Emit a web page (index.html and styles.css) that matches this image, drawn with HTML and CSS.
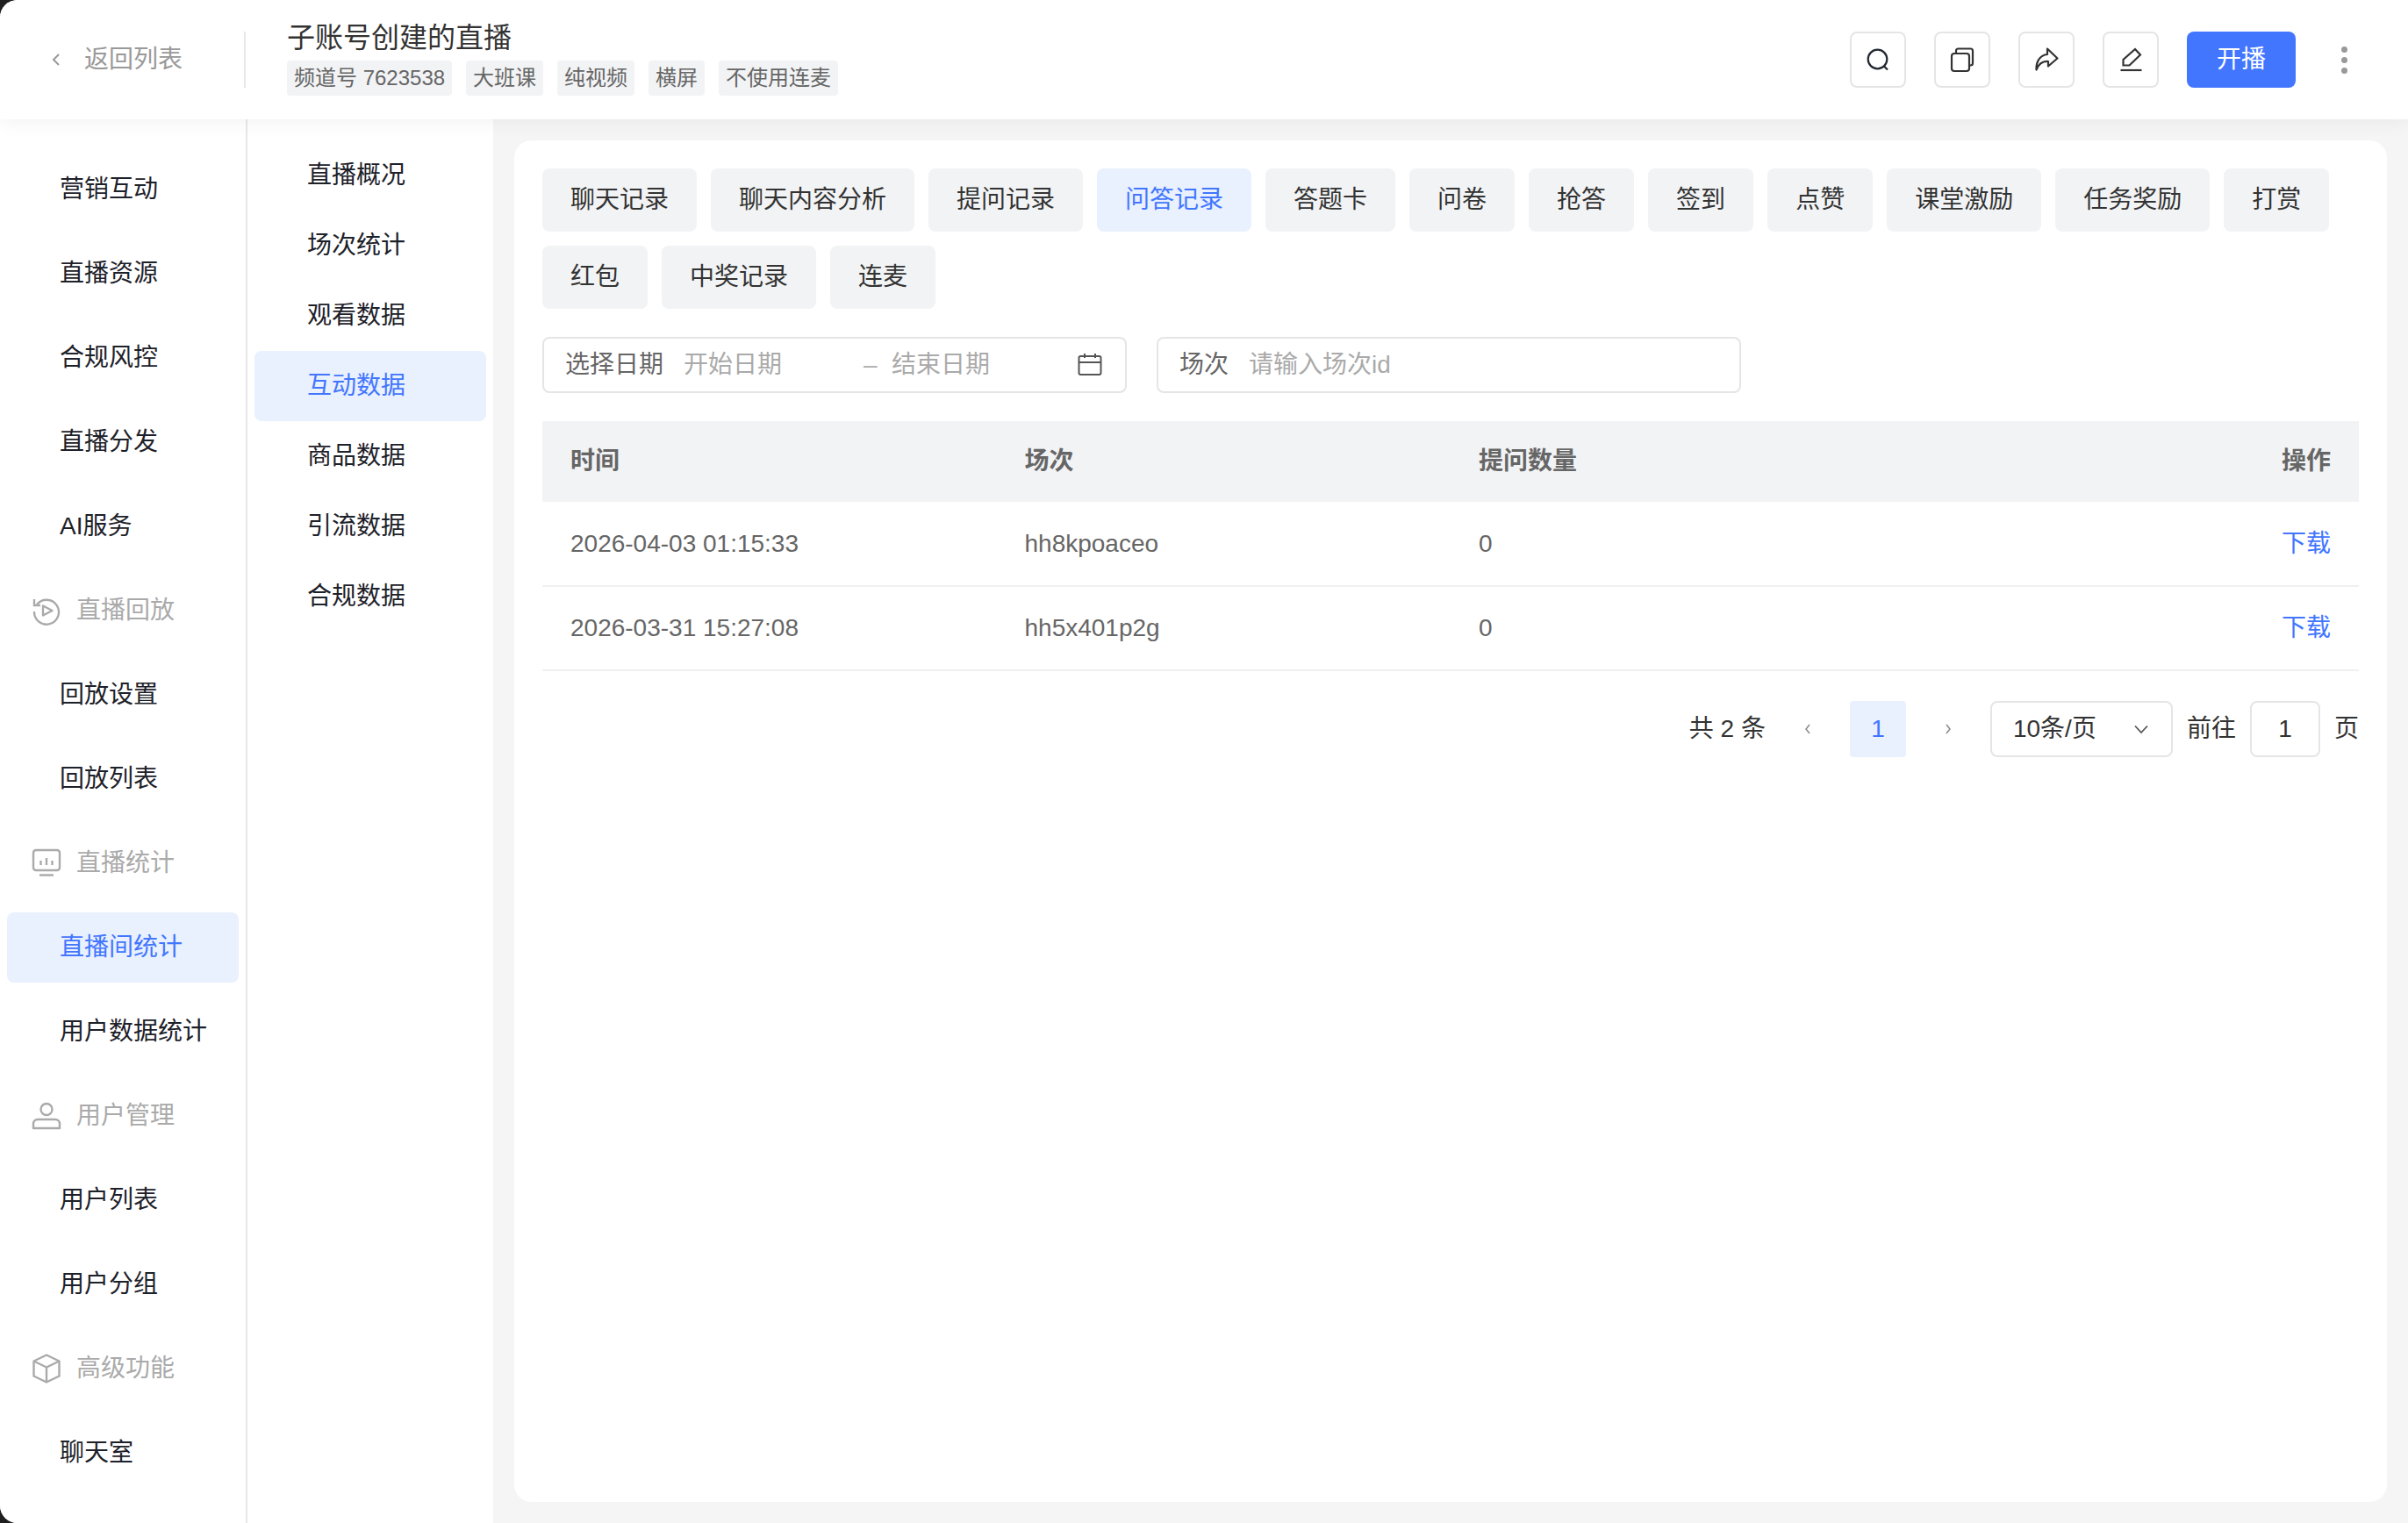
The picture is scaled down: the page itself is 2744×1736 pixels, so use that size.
FILE: index.html
```html
<!DOCTYPE html>
<html lang="zh-CN">
<head>
<meta charset="utf-8">
<title>互动数据</title>
<link rel="stylesheet" href="styles.css">
</head>
<body>
<div class="app">
  <header class="topbar">
    <a class="back">
      <svg class="back-icon" width="16" height="24" viewBox="0 0 16 24"><path d="M11 6 5 12l6 6" fill="none" stroke="#999" stroke-width="2"/></svg>
      <span>返回列表</span>
    </a>
    <div class="title-block">
      <h1 class="title">子账号创建的直播</h1>
      <div class="tags">
        <span class="tag">频道号 7623538</span>
        <span class="tag">大班课</span>
        <span class="tag">纯视频</span>
        <span class="tag">横屏</span>
        <span class="tag">不使用连麦</span>
      </div>
    </div>
    <div class="actions">
      <button class="icon-btn"><svg width="32" height="32" viewBox="0 0 32 32" fill="none" stroke="#222831" stroke-width="2.2"><circle cx="15.5" cy="15.5" r="10.8"/><path d="M22.5 23 27 27.5"/></svg></button>
      <button class="icon-btn"><svg width="32" height="32" viewBox="0 0 32 32" fill="none" stroke="#333" stroke-width="2.2"><rect x="4" y="9" width="20" height="20" rx="3"/><path d="M9 8.500V6a2.500 2.500 0 0 1 2.500-2.500H25.500A2.500 2.500 0 0 1 28 6V20a2.500 2.500 0 0 1-2.500 2.500H24"/></svg></button>
      <button class="icon-btn"><svg width="32" height="32" viewBox="0 0 32 32" fill="none" stroke="#333" stroke-width="2.2" stroke-linejoin="round"><path d="M17 3.500 28.500 14.500 18 23.500V18C12 17.500 7.500 20 4.500 27.500 4 18 9 10.500 17 10Z"/></svg></button>
      <button class="icon-btn"><svg width="32" height="32" viewBox="0 0 32 32" fill="none" stroke="#333" stroke-width="2.2"><path d="M21 4 27 10.500 14.500 22.500H7.500V16Z"/><path d="M4.500 28H28.500"/></svg></button>
      <button class="primary-btn">开播</button>
      <span class="more"><i></i><i></i><i></i></span>
    </div>
  </header>
  <div class="main">
    <nav class="nav-primary">
      <a class="nav-item">营销互动</a>
      <a class="nav-item">直播资源</a>
      <a class="nav-item">合规风控</a>
      <a class="nav-item">直播分发</a>
      <a class="nav-item">AI服务</a>
      <div class="nav-group">
        <svg width="36" height="36" viewBox="0 0 36 36" fill="none" stroke="#aaa" stroke-width="2.4"><path d="M7 11A14 14 0 1 1 4 19"/><path d="M4 5V12H11"/><path d="M14 12.500 24.500 18 14 23.500Z" stroke-linejoin="round"/></svg>
        <span>直播回放</span>
      </div>
      <a class="nav-item">回放设置</a>
      <a class="nav-item">回放列表</a>
      <div class="nav-group">
        <svg width="36" height="36" viewBox="0 0 36 36" fill="none" stroke="#aaa" stroke-width="2.4"><rect x="3" y="3" width="30" height="23" rx="3"/><path d="M10 31.500H26"/><path d="M11.500 15V20M18 12V20M24.500 15V20"/></svg>
        <span>直播统计</span>
      </div>
      <a class="nav-item is-active">直播间统计</a>
      <a class="nav-item">用户数据统计</a>
      <div class="nav-group">
        <svg width="36" height="36" viewBox="0 0 36 36" fill="none" stroke="#aaa" stroke-width="2.4"><circle cx="18" cy="10.500" r="6.500"/><path d="M3 32V27A5 5 0 0 1 8 22H28A5 5 0 0 1 33 27V32Z" stroke-linejoin="round"/></svg>
        <span>用户管理</span>
      </div>
      <a class="nav-item">用户列表</a>
      <a class="nav-item">用户分组</a>
      <div class="nav-group">
        <svg width="36" height="36" viewBox="0 0 36 36" fill="none" stroke="#aaa" stroke-width="2.4" stroke-linejoin="round"><path d="M18 2.500 32.500 9.500V26.500L18 33.500 3.500 26.500V9.500Z"/><path d="M3.500 9.500 18 16.500 32.500 9.500M18 16.500V33.500"/></svg>
        <span>高级功能</span>
      </div>
      <a class="nav-item">聊天室</a>
    </nav>
    <nav class="nav-secondary">
      <a class="sub-item">直播概况</a>
      <a class="sub-item">场次统计</a>
      <a class="sub-item">观看数据</a>
      <a class="sub-item is-active">互动数据</a>
      <a class="sub-item">商品数据</a>
      <a class="sub-item">引流数据</a>
      <a class="sub-item">合规数据</a>
    </nav>
    <section class="content">
      <div class="card">
        <div class="tabs">
          <span class="tab">聊天记录</span>
          <span class="tab">聊天内容分析</span>
          <span class="tab">提问记录</span>
          <span class="tab is-active">问答记录</span>
          <span class="tab">答题卡</span>
          <span class="tab">问卷</span>
          <span class="tab">抢答</span>
          <span class="tab">签到</span>
          <span class="tab">点赞</span>
          <span class="tab">课堂激励</span>
          <span class="tab">任务奖励</span>
          <span class="tab">打赏</span>
          <span class="tab">红包</span>
          <span class="tab">中奖记录</span>
          <span class="tab">连麦</span>
        </div>
        <div class="filters">
          <div class="field">
            <span class="field-label">选择日期</span>
            <span class="ph ph-start">开始日期</span>
            <span class="ph ph-dash">–</span>
            <span class="ph ph-end">结束日期</span>
            <svg class="cal" width="28" height="28" viewBox="0 0 28 28" fill="none" stroke="#555" stroke-width="2"><rect x="1.500" y="4" width="25" height="21" rx="2"/><path d="M1.500 11H26.500M8 1V6M20 1V6"/></svg>
          </div>
          <div class="field">
            <span class="field-label">场次</span>
            <span class="ph">请输入场次id</span>
          </div>
        </div>
        <table class="table">
          <thead>
            <tr><th>时间</th><th>场次</th><th>提问数量</th><th class="right">操作</th></tr>
          </thead>
          <tbody>
            <tr><td>2026-04-03 01:15:33</td><td>hh8kpoaceo</td><td>0</td><td class="right"><a class="link">下载</a></td></tr>
            <tr><td>2026-03-31 15:27:08</td><td>hh5x401p2g</td><td>0</td><td class="right"><a class="link">下载</a></td></tr>
          </tbody>
        </table>
        <div class="pager">
          <span>共 2 条</span>
          <span class="page-arrow"><svg width="12" height="16" viewBox="0 0 12 16"><path d="M8 3 4 8l4 5" fill="none" stroke="#888" stroke-width="1.500"/></svg></span>
          <span class="page-num">1</span>
          <span class="page-arrow"><svg width="12" height="16" viewBox="0 0 12 16"><path d="M4 3l4 5-4 5" fill="none" stroke="#888" stroke-width="1.500"/></svg></span>
          <span class="page-select"><span>10条/页</span><svg width="20" height="20" viewBox="0 0 20 20"><path d="M3 6.500 10 14l7-7.500" fill="none" stroke="#555" stroke-width="1.800"/></svg></span>
          <span>前往</span>
          <span class="page-input">1</span>
          <span>页</span>
        </div>
      </div>
    </section>
  </div>
</div>
</body>
</html>
```

FILE: styles.css
```css
* { box-sizing: border-box; }
html, body { margin: 0; height: 100%; background: #1f1f1f; }
body {
  font-family: "Liberation Sans", "Noto Sans CJK SC", sans-serif;
  font-size: 28px;
  line-height: 40px;
  color: #333;
}
.app {
  height: 1736px;
  display: flex;
  flex-direction: column;
  overflow: hidden;
  background: #fff;
  border-radius: 20px 0 0 20px;
}
.topbar {
  position: relative;
  z-index: 2;
  flex: none;
  height: 136px;
  display: flex;
  align-items: center;
  background: #fff;
  box-shadow: 0 4px 20px rgba(0, 0, 0, .05);
}
.back {
  width: 280px;
  height: 64px;
  display: flex;
  align-items: center;
  padding-left: 56px;
  gap: 24px;
  color: #999;
  border-right: 2px solid #e8e8e8;
}
.back-icon { flex: none; }
.title-block { margin-left: 47px; }
.title {
  margin: 0 0 4px;
  font-size: 32px;
  font-weight: 400;
  line-height: 44px;
  color: #333;
  margin-top: -6px;
}
.tags { display: flex; gap: 16px; }
.tag {
  height: 40px;
  padding: 0 8px;
  font-size: 24px;
  line-height: 40px;
  color: #666;
  background: #f2f3f5;
  border-radius: 4px;
}
.actions {
  margin-left: auto;
  display: flex;
  align-items: center;
  gap: 32px;
  padding-right: 68px;
}
.icon-btn {
  width: 64px;
  height: 64px;
  padding: 0;
  display: flex;
  align-items: center;
  justify-content: center;
  background: #fff;
  border: 2px solid #e5e5e5;
  border-radius: 8px;
}
.primary-btn {
  width: 124px;
  height: 64px;
  padding: 0;
  font: inherit;
  color: #fff;
  background: #4276ff;
  border: 0;
  border-radius: 8px;
}
.more {
  width: 8px;
  margin-left: 20px;
  display: flex;
  flex-direction: column;
  gap: 5px;
}
.more i {
  width: 7px;
  height: 7px;
  border-radius: 50%;
  background: #999;
}
.main { flex: 1; min-height: 0; display: flex; }
.nav-primary {
  flex: none;
  width: 282px;
  padding: 40px 8px 0;
  display: flex;
  flex-direction: column;
  gap: 16px;
  background: #fff;
  border-right: 2px solid #e8e8e8;
}
.nav-item {
  flex: none;
  width: 264px;
  height: 80px;
  padding-left: 60px;
  line-height: 80px;
  color: #1d2129;
  border-radius: 8px;
}
.nav-item.is-active { color: #4276ff; background: #e9f0fe; }
.nav-group {
  flex: none;
  height: 80px;
  display: flex;
  align-items: center;
  gap: 16px;
  padding-left: 27px;
  color: #aaa;
}
.nav-secondary {
  flex: none;
  width: 280px;
  padding: 24px 8px 0;
  background: #fff;
}
.sub-item {
  display: block;
  height: 80px;
  padding-left: 60px;
  line-height: 80px;
  color: #1d2129;
  border-radius: 8px;
}
.sub-item.is-active { color: #4276ff; background: #e9f0fe; }
.content {
  flex: 1;
  min-width: 0;
  padding: 24px 24px 24px 24px;
  background: #f5f5f5;
}
.card {
  height: 100%;
  padding: 32px;
  background: #fff;
  border-radius: 20px;
}
.tabs { display: flex; flex-wrap: wrap; gap: 16px; }
.tab {
  height: 72px;
  padding: 0 32px;
  line-height: 72px;
  color: #333;
  background: #f2f3f5;
  border-radius: 8px;
}
.tab.is-active { color: #4276ff; background: #e9f0fe; }
.filters { margin-top: 32px; display: flex; gap: 34px; }
.field {
  width: 666px;
  height: 64px;
  padding: 0 24px;
  display: flex;
  align-items: center;
  color: #666;
  border: 2px solid #e5e5e5;
  border-radius: 8px;
}
.field-label { margin-right: 23px; }
.ph { color: #aaa; }
.ph-start { width: 205px; }
.ph-dash { width: 32px; }
.ph-end { flex: 1; }
.cal { flex: none; margin-right: 2px; }
.table {
  width: 100%;
  margin-top: 32px;
  table-layout: fixed;
  border-collapse: collapse;
}
.table th {
  height: 92px;
  padding: 0 32px;
  font-weight: 700;
  text-align: left;
  color: #666;
  background: #f2f3f5;
}
.table td {
  height: 96px;
  padding: 0 32px;
  color: #666;
  border-bottom: 2px solid #f0f0f0;
}
.table .right { text-align: right; }
.link { color: #4276ff; }
.pager {
  margin-top: 34px;
  display: flex;
  justify-content: flex-end;
  align-items: center;
  gap: 16px;
  color: #333;
}
.page-arrow, .page-num {
  width: 64px;
  height: 64px;
  display: flex;
  align-items: center;
  justify-content: center;
}
.page-num { color: #4276ff; background: #e9f0fe; border-radius: 4px; }
.page-select {
  width: 208px;
  height: 64px;
  padding: 0 24px;
  display: flex;
  align-items: center;
  justify-content: space-between;
  border: 2px solid #e5e5e5;
  border-radius: 8px;
}
.page-input {
  width: 80px;
  height: 64px;
  line-height: 60px;
  text-align: center;
  border: 2px solid #e5e5e5;
  border-radius: 8px;
}
```
